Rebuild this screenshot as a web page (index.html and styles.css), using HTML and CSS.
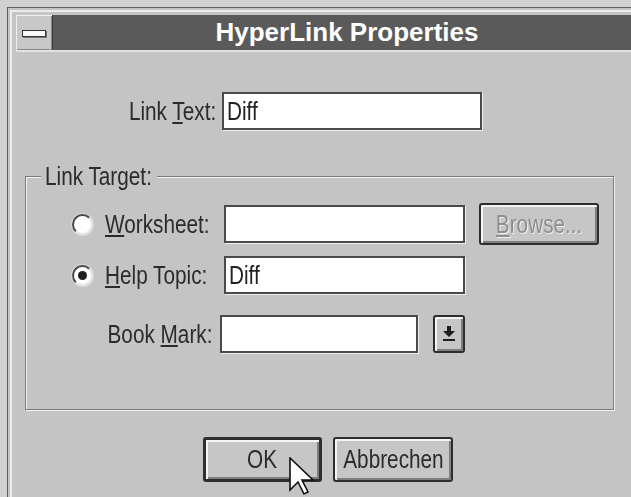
FILE: index.html
```html
<!DOCTYPE html>
<html lang="de">
<head>
<meta charset="utf-8">
<title>HyperLink Properties</title>
<link rel="stylesheet" href="styles.css">
</head>
<body>
<div class="window">
  <div class="titlebar">
    <div class="sysmenu"><span class="sysbar"></span></div>
    <div class="caption">HyperLink Properties</div>
  </div>
  <div class="client">
    <div class="link-row">
      <div class="lbl lbl-link"><span class="tx tx-r">Link <u>T</u>ext:</span></div>
      <div class="field field-link"><span class="tx">Diff</span></div>
    </div>

    <div class="group">
      <div class="legend"><span class="tx">Link Target:</span></div>

      <div class="opt-row">
        <span class="radio"></span>
        <span class="opt-label"><span class="tx"><u>W</u>orksheet:</span></span>
        <div class="field field-target"></div>
        <div class="btn btn-browse"><span class="tx tx-c disabled"><u>B</u>rowse...</span></div>
      </div>

      <div class="opt-row opt-help">
        <span class="radio checked"></span>
        <span class="opt-label"><span class="tx"><u>H</u>elp Topic:</span></span>
        <div class="field field-target"><span class="tx">Diff</span></div>
      </div>

      <div class="opt-row opt-book">
        <span class="lbl lbl-book"><span class="tx tx-r">Book <u>M</u>ark:</span></span>
        <div class="field field-book"></div>
        <div class="btn btn-drop">
          <svg width="12" height="16" viewBox="0 0 12 16" aria-hidden="true">
            <path d="M4 0h4v5h4l-6 6l-6-6h4z" fill="#1e1e1e"/>
            <rect x="0" y="13" width="12" height="2" fill="#1e1e1e"/>
          </svg>
        </div>
      </div>
    </div>

    <div class="buttons">
      <div class="btn btn-default"><span class="tx tx-c">OK</span>
        <svg class="pointer" width="26" height="40" viewBox="0 0 26 40" aria-hidden="true">
          <path d="M1 1v32l8-8l6 12l4-2l-6-12h11z" fill="#fff" stroke="#111" stroke-width="1.6" stroke-linejoin="miter"/>
        </svg>
      </div>
      <div class="btn btn-cancel"><span class="tx tx-c">Abbrechen</span></div>
    </div>
  </div>
</div>
</body>
</html>
```

FILE: styles.css
```css
body {
  margin: 0;
  width: 631px;
  height: 497px;
  overflow: hidden;
  background: #d0d0d0;
  font-family: "Liberation Sans", Arial, sans-serif;
  font-size: 25px;
  color: #2b2b2b;
}

/* the dialog font is a tall, narrow sans: squeeze each text run horizontally */
.tx {
  display: inline-block;
  white-space: nowrap;
  transform: scaleX(0.83);
  transform-origin: left center;
}

.tx-r {
  transform-origin: right center;
}

.tx-c {
  transform-origin: center center;
}

/* dialog frame: dark outline, light band with a white highlight */
.window {
  margin: 7px 0 0 7px;
  width: 660px;
  height: 520px;
  border-top: 1px solid #5e5e5e;
  border-left: 1px solid #5e5e5e;
  background: #c4c4c4;
  box-shadow: inset 2px 2px 0 #c4c4c4, inset 4px 4px 0 #ececec;
}

.titlebar {
  display: flex;
  height: 35px;
  margin: 7px 27px 0 8px;
  border-bottom: 2px solid #e2e2e2;
}

.sysmenu {
  width: 36px;
  background: #c8c8c8;
  border-right: 1px solid #3a3a3a;
  box-shadow: inset 1px 1px 0 #efefef, inset -1px -1px 0 #8a8a8a;
  display: flex;
  align-items: center;
  justify-content: center;
}

.sysbar {
  width: 22px;
  height: 5px;
  margin-top: 2px;
  background: #fafafa;
  border: 1px solid #333;
  box-shadow: 1px 1px 0 #777;
}

.caption {
  flex: 1;
  background: #5a5a5a;
  color: #fff;
  font-weight: bold;
  font-size: 26px;
  line-height: 35px;
  text-align: center;
}

.link-row {
  display: flex;
  align-items: center;
  height: 38px;
  margin-top: 40px;
}

.lbl {
  text-align: right;
  line-height: 26px;
}

.lbl-link {
  width: 208px;
}

.field {
  box-sizing: border-box;
  height: 38px;
  background: #fff;
  border: 2px solid #4a4a4a;
  box-shadow: 1px 1px 0 #efefef;
  padding-left: 3px;
  line-height: 34px;
  color: #222;
}

.field-link {
  width: 260px;
  margin-left: 6px;
}

/* etched group box */
.group {
  position: relative;
  box-sizing: border-box;
  width: 589px;
  margin: 46px 0 0 17px;
  padding: 26px 0 54px 0;
  border: 1px solid #7a7a7a;
  box-shadow: inset 1px 1px 0 #f2f2f2, 1px 1px 0 #f2f2f2;
}

.legend {
  position: absolute;
  left: 15px;
  top: -14px;
  width: 108px;
  padding: 0 4px;
  background: #c4c4c4;
  line-height: 26px;
}

.opt-row {
  display: flex;
  align-items: center;
  height: 42px;
}

.opt-help {
  margin-top: 9px;
}

.opt-book {
  margin-top: 17px;
}

.radio {
  box-sizing: border-box;
  width: 21px;
  height: 21px;
  margin-left: 46px;
  border-radius: 50%;
  background: #fff;
  border: 2px solid;
  border-color: #4a4a4a #e6e6e6 #e6e6e6 #4a4a4a;
  box-shadow: 0 0 0 1px #d8d8d8;
  display: flex;
  align-items: center;
  justify-content: center;
}

.radio.checked::after {
  content: "";
  width: 9px;
  height: 9px;
  border-radius: 50%;
  background: #1e1e1e;
}

.opt-label {
  width: 119px;
  margin-left: 12px;
  line-height: 26px;
}

.field-target {
  width: 241px;
}

.lbl-book {
  width: 186px;
}

.field-book {
  width: 198px;
  margin-left: 8px;
}

/* push buttons */
.btn {
  position: relative;
  box-sizing: border-box;
  display: flex;
  align-items: center;
  justify-content: center;
  background: #c6c6c6;
  border: 2px solid #2e2e2e;
  border-radius: 3px;
  box-shadow: inset 2px 2px 0 #f4f4f4, inset -2px -2px 0 #7e7e7e;
  color: #2b2b2b;
}

.btn-browse {
  width: 120px;
  height: 42px;
  margin-left: 14px;
}

.disabled {
  color: #8e8e8e;
  text-shadow: 1px 1px 0 #f0f0f0;
}

.btn-drop {
  width: 32px;
  height: 38px;
  margin-left: 15px;
}

.buttons {
  display: flex;
  gap: 11px;
  margin: 27px 0 0 195px;
}

.btn-default {
  width: 119px;
  height: 45px;
  border-width: 3px;
}

.btn-cancel {
  width: 120px;
  height: 45px;
}

.pointer {
  position: absolute;
  left: 83px;
  top: 17px;
}
```
